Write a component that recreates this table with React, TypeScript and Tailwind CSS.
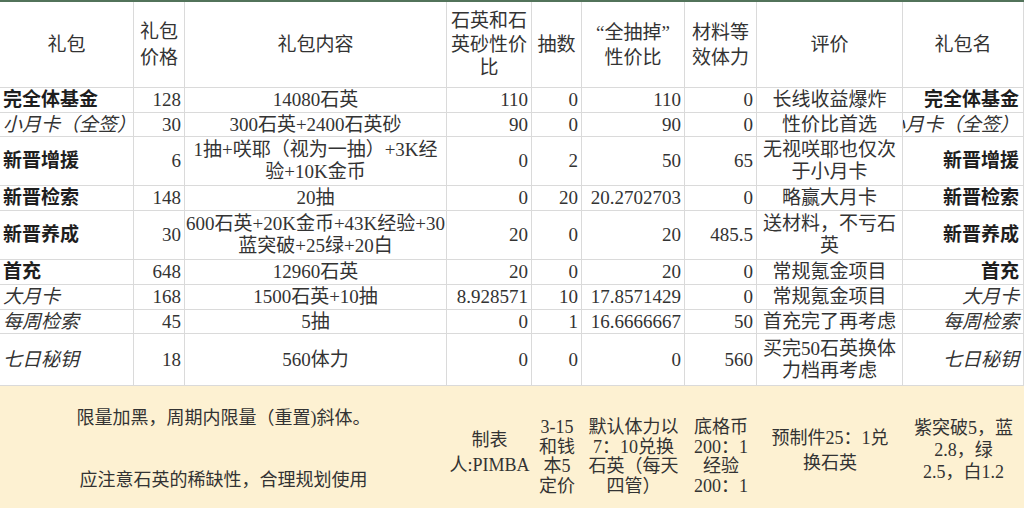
import React from "react";

type Row = {
  name: string;
  kind: "bold" | "italic";
  price: string;
  content: string[];
  a: string;
  b: string;
  c: string;
  d: string;
  evalText: string[];
  h: string;
};

const rows: Row[] = [
  { name: "完全体基金", kind: "bold", price: "128", content: ["14080石英"], a: "110", b: "0", c: "110", d: "0", evalText: ["长线收益爆炸"], h: "h-[25px]" },
  { name: "小月卡（全签）", kind: "italic", price: "30", content: ["300石英+2400石英砂"], a: "90", b: "0", c: "90", d: "0", evalText: ["性价比首选"], h: "h-[24px]" },
  { name: "新晋增援", kind: "bold", price: "6", content: ["1抽+咲耶（视为一抽）+3K经", "验+10K金币"], a: "0", b: "2", c: "50", d: "65", evalText: ["无视咲耶也仅次", "于小月卡"], h: "h-[49px]" },
  { name: "新晋检索", kind: "bold", price: "148", content: ["20抽"], a: "0", b: "20", c: "20.2702703", d: "0", evalText: ["略赢大月卡"], h: "h-[25px]" },
  { name: "新晋养成", kind: "bold", price: "30", content: ["600石英+20K金币+43K经验+30", "蓝突破+25绿+20白"], a: "20", b: "0", c: "20", d: "485.5", evalText: ["送材料，不亏石", "英"], h: "h-[49px]" },
  { name: "首充", kind: "bold", price: "648", content: ["12960石英"], a: "20", b: "0", c: "20", d: "0", evalText: ["常规氪金项目"], h: "h-[25px]" },
  { name: "大月卡", kind: "italic", price: "168", content: ["1500石英+10抽"], a: "8.928571", b: "10", c: "17.8571429", d: "0", evalText: ["常规氪金项目"], h: "h-[25px]" },
  { name: "每周检索", kind: "italic", price: "45", content: ["5抽"], a: "0", b: "1", c: "16.6666667", d: "50", evalText: ["首充完了再考虑"], h: "h-[24px]" },
  { name: "七日秘钥", kind: "italic", price: "18", content: ["560体力"], a: "0", b: "0", c: "0", d: "560", evalText: ["买完50石英换体", "力档再考虑"], h: "h-[52px]" },
];

const cellBase =
  "border-r border-b border-[#dadada] overflow-hidden whitespace-nowrap flex items-center";

function Lines({ lines, lh }: { lines: string[]; lh: string }) {
  return (
    <div className={`text-center ${lh}`}>
      {lines.map((l, i) => (
        <div key={i}>{l}</div>
      ))}
    </div>
  );
}

function NameCell({ r, align }: { r: Row; align: "left" | "right" }) {
  const style = r.kind === "bold" ? "font-bold text-[#1e1e1e]" : "italic";
  return (
    <div
      className={`${cellBase} ${r.h} ${align === "left" ? "justify-start pl-[3px]" : "justify-end pr-[4px]"}`}
    >
      <span className={`shrink-0 ${style}`}>{r.name}</span>
    </div>
  );
}

function Num({ v, h }: { v: string; h: string }) {
  return <div className={`${cellBase} ${h} justify-end pr-[3px]`}>{v}</div>;
}

export default function App() {
  return (
    <div
      className="w-[1024px] h-[508px] overflow-hidden bg-white text-[#333333] text-[19px] leading-[24px] border-t-2 border-[#52735a]"
      style={{ fontFamily: '"Liberation Serif", "Noto Sans CJK SC", serif' }}
    >
      <div className="grid grid-cols-[134px_51px_262px_85px_50px_103px_72px_146px_121px]">
        {/* header */}
        <div className={`${cellBase} h-[86px] justify-center`}>礼包</div>
        <div className={`${cellBase} h-[86px] justify-center`}>
          <Lines lines={["礼包", "价格"]} lh="leading-[26px]" />
        </div>
        <div className={`${cellBase} h-[86px] justify-center`}>礼包内容</div>
        <div className={`${cellBase} h-[86px] justify-center`}>
          <Lines lines={["石英和石", "英砂性价", "比"]} lh="leading-[23.5px]" />
        </div>
        <div className={`${cellBase} h-[86px] justify-center`}>抽数</div>
        <div className={`${cellBase} h-[86px] justify-center`}>
          <Lines lines={["“全抽掉”", "性价比"]} lh="leading-[25px]" />
        </div>
        <div className={`${cellBase} h-[86px] justify-center`}>
          <Lines lines={["材料等", "效体力"]} lh="leading-[25px]" />
        </div>
        <div className={`${cellBase} h-[86px] justify-center`}>评价</div>
        <div className={`${cellBase} h-[86px] justify-center`}>礼包名</div>

        {rows.map((r, i) => (
          <React.Fragment key={i}>
            <NameCell r={r} align="left" />
            <Num v={r.price} h={r.h} />
            <div className={`${cellBase} ${r.h} justify-center`}>
              <Lines lines={r.content} lh="leading-[22px]" />
            </div>
            <Num v={r.a} h={r.h} />
            <Num v={r.b} h={r.h} />
            <Num v={r.c} h={r.h} />
            <Num v={r.d} h={r.h} />
            <div className={`${cellBase} ${r.h} justify-center`}>
              <Lines lines={r.evalText} lh="leading-[22px]" />
            </div>
            <NameCell r={r} align="right" />
          </React.Fragment>
        ))}
      </div>

      {/* footer */}
      <div className="grid grid-cols-[447px_85px_50px_103px_72px_146px_121px] h-[140px] bg-[#fdf1d2] text-[18px] text-[#333333]">
        <div className="flex flex-col items-center pt-[20px] gap-[38px] leading-[24px] whitespace-nowrap">
          <div>限量加黑，周期内限量（重置)斜体。</div>
          <div>应注意石英的稀缺性，合理规划使用</div>
        </div>
        <div className="flex flex-col items-center pt-[42px] leading-[25px] whitespace-nowrap">
          <div>制表</div>
          <div>人:PIMBA</div>
        </div>
        <div className="flex flex-col items-center pt-[32px] leading-[19.7px] whitespace-nowrap">
          <div>3-15</div>
          <div>和钱</div>
          <div>本5</div>
          <div>定价</div>
        </div>
        <div className="flex flex-col items-center pt-[32px] leading-[19.7px] whitespace-nowrap">
          <div>默认体力以</div>
          <div>7：10兑换</div>
          <div>石英（每天</div>
          <div>四管）</div>
        </div>
        <div className="flex flex-col items-center pt-[32px] leading-[19.7px] whitespace-nowrap">
          <div>底格币</div>
          <div>200：1</div>
          <div>经验</div>
          <div>200：1</div>
        </div>
        <div className="flex flex-col items-center pt-[40px] leading-[25px] whitespace-nowrap">
          <div>预制件25：1兑</div>
          <div>换石英</div>
        </div>
        <div className="flex flex-col items-center pt-[31px] leading-[22px] whitespace-nowrap">
          <div>紫突破5，蓝</div>
          <div>2.8，绿</div>
          <div>2.5，白1.2</div>
        </div>
      </div>
    </div>
  );
}
